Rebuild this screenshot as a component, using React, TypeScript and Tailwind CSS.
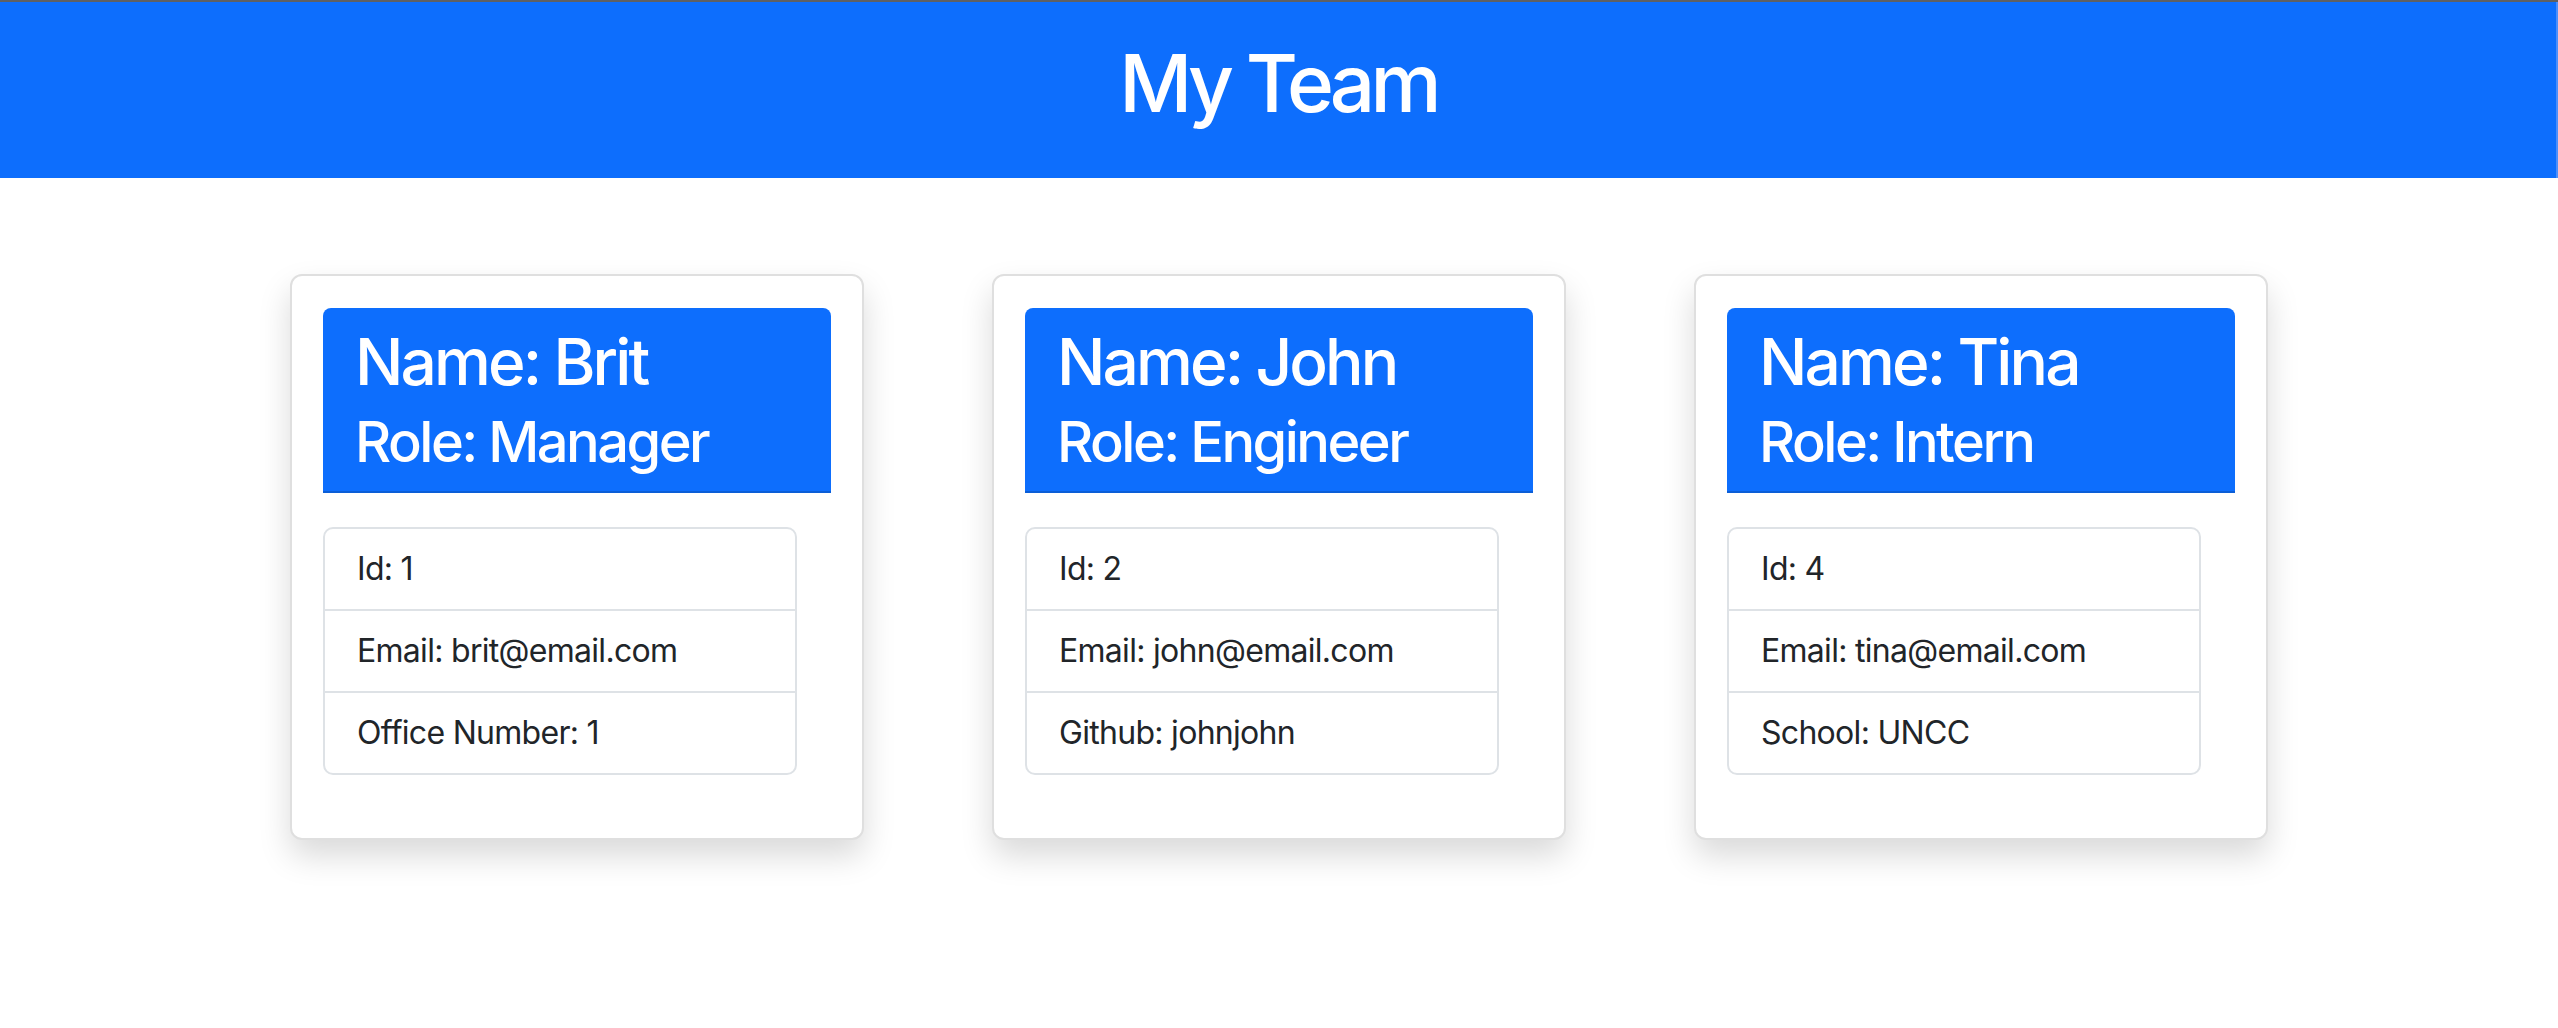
const team = [
  { name: "Brit", role: "Manager", id: 1, email: "brit@email.com", extra: "Office Number: 1" },
  { name: "John", role: "Engineer", id: 2, email: "john@email.com", extra: "Github: johnjohn" },
  { name: "Tina", role: "Intern", id: 4, email: "tina@email.com", extra: "School: UNCC" },
];

function MemberCard({ member }: { member: (typeof team)[number] }) {
  return (
    <div className="w-[574px] rounded-[12px] border-2 border-[#dfdfdf] bg-white px-[31px] pb-[63px] pt-[32px] shadow-[0_16px_32px_rgba(0,0,0,0.15)]">
      <div className="rounded-t-[8px] border-b-2 border-[#0b5ed7] bg-[#0d6efd] px-[32px] pb-[15px] pt-[16px] text-white">
        <h2 className="text-[64px] font-medium leading-[1.2] tracking-[-0.045em]">Name: {member.name}</h2>
        <h3 className="mt-[8px] text-[56px] font-medium leading-[1.2] tracking-[-0.045em]">Role: {member.role}</h3>
      </div>
      <ul className="mt-[34px] w-[474px] overflow-hidden rounded-[10px] border-2 border-[#dee2e6] text-[32px] leading-[48px] tracking-[-0.022em] text-[#212529]">
        <li className="px-[32px] py-[16px]">Id: {member.id}</li>
        <li className="border-t-2 border-[#dee2e6] px-[32px] py-[16px]">Email: {member.email}</li>
        <li className="border-t-2 border-[#dee2e6] px-[32px] py-[16px]">{member.extra}</li>
      </ul>
    </div>
  );
}

export default function App() {
  return (
    <div className="min-h-screen bg-white font-['Inter',sans-serif]">
      <div className="h-[2px] bg-[#5f6062]" />
      <header className="h-[176px] border-r-2 border-[#4b8ffc] bg-[#0d6efd] pt-[33px] text-center">
        <h1 className="text-[80px] font-medium leading-[1.2] tracking-[-0.06em] text-white">My Team</h1>
      </header>
      <main className="flex justify-center gap-[128px] pt-[96px]">
        {team.map((member) => (
          <MemberCard key={member.id} member={member} />
        ))}
      </main>
    </div>
  );
}
